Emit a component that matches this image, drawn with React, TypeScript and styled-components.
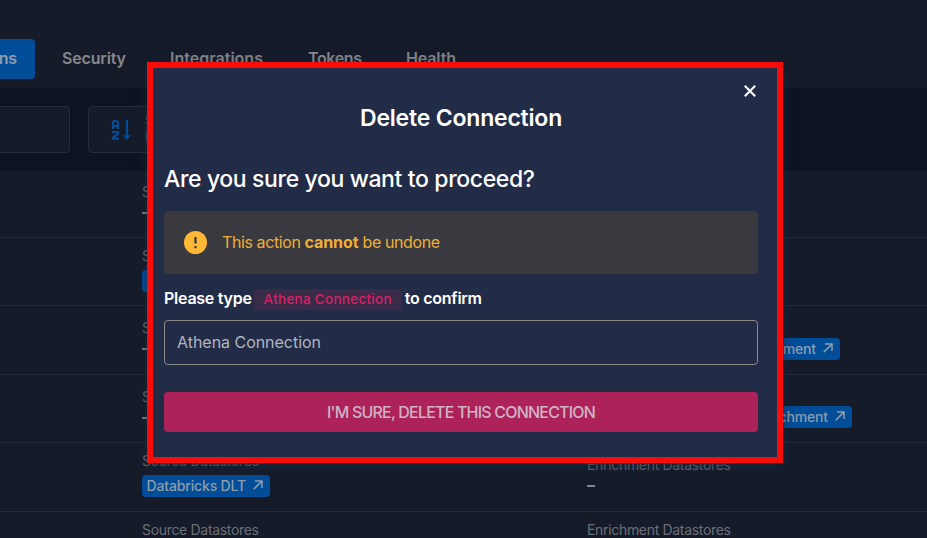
import React from 'react';
import styled, { createGlobalStyle } from 'styled-components';

const GlobalStyle = createGlobalStyle`
  * { box-sizing: border-box; }
  body { margin: 0; background: #151b29; overflow: hidden; }
  button, input { font: inherit; }
`;

const Page = styled.div`
  position: relative;
  width: 927px;
  height: 538px;
  overflow: hidden;
  background: #151b29;
  color: #85878c;
  font-family: Inter, 'Liberation Sans', sans-serif;
`;

const Tabs = styled.nav`
  display: flex;
  align-items: flex-start;
  height: 88px;
  padding-top: 39px;
`;

const Tab = styled.span<{ $width: number; $gap: number; $spacing: number }>`
  width: ${(p) => p.$width}px;
  height: 40px;
  margin-left: ${(p) => p.$gap}px;
  font-size: 16px;
  font-weight: 600;
  line-height: 38px;
  letter-spacing: ${(p) => p.$spacing}px;
  white-space: nowrap;
`;

const ActiveTab = styled(Tab)`
  display: flex;
  justify-content: flex-end;
  padding-right: 18px;
  overflow: hidden;
  border-radius: 0 4px 4px 0;
  background: #024d98;
  color: #8f9dad;
`;

const Toolbar = styled.div`
  display: flex;
  gap: 18px;
  height: 83px;
  padding-top: 18px;
  background: #0d1321;
`;

const SearchField = styled.div`
  width: 70px;
  height: 47px;
  border: 1px solid #262c39;
  border-left: 0;
  border-radius: 0 4px 4px 0;
  background: #151b29;
`;

const SortField = styled.div`
  display: flex;
  align-items: flex-start;
  width: 190px;
  height: 47px;
  padding: 12px 0 0 22px;
  border: 1px solid #262c39;
  border-radius: 4px;
  background: #151b29;
`;

const SortText = styled.div`
  display: flex;
  flex-direction: column;
  margin: -5px 0 0 13px;
  color: #5d626c;
  font-size: 15px;
  line-height: 21px;
`;

const SortLabel = styled.span`
  font-size: 10px;
  line-height: 12px;
`;

const Row = styled.div<{ $height: number }>`
  display: grid;
  grid-template-columns: 445px 1fr;
  height: ${(p) => p.$height}px;
  padding-left: 142px;
  border-bottom: 1px solid #252b38;
`;

const Cell = styled.div<{ $top: number }>`
  display: flex;
  flex-direction: column;
  align-items: flex-start;
  padding-top: ${(p) => p.$top}px;
`;

const Label = styled.span`
  color: #6b6f78;
  font-size: 14px;
  line-height: 18px;
  letter-spacing: -0.32px;
  white-space: nowrap;
`;

const Dash = styled.span`
  width: 8px;
  height: 2px;
  margin-top: 11px;
  background: #85878c;
`;

const Chip = styled.span<{ $width?: number }>`
  display: flex;
  align-items: center;
  justify-content: flex-end;
  gap: 7px;
  width: ${(p) => p.$width}px;
  height: 22px;
  margin-top: 5px;
  padding: 0 7px 2px 0;
  border-radius: 4px;
  background: #024d98;
  color: #8f9dad;
  font-size: 14px;
  font-weight: 500;
  letter-spacing: -0.15px;
  white-space: nowrap;
`;

const Dialog = styled.section`
  position: absolute;
  left: 147px;
  top: 62px;
  display: flex;
  flex-direction: column;
  width: 636px;
  height: 401px;
  padding: 0 19px 0 11px;
  border: 6px solid #f90d0a;
  background: #232c47;
  box-shadow: 0 4px 12px 0 rgba(25, 42, 66, 0.7);
  color: #fff;
`;

const CloseRow = styled.div`
  display: flex;
  justify-content: flex-end;
  height: 34px;
  padding-top: 15px;
`;

const CloseButton = styled.button`
  display: flex;
  align-items: center;
  justify-content: center;
  width: 16px;
  height: 16px;
  padding: 0;
  border: 0;
  background: none;
  color: #fff;
`;

const Title = styled.h1`
  margin: 0;
  font-size: 23px;
  font-weight: 600;
  line-height: 32px;
  letter-spacing: -0.2px;
  text-align: center;
`;

const Question = styled.h2`
  margin: 29px 0 0;
  font-size: 23px;
  font-weight: 500;
  line-height: 32px;
  letter-spacing: -0.37px;
`;

const Warning = styled.div`
  display: flex;
  align-items: center;
  gap: 15px;
  height: 63px;
  margin-top: 16px;
  padding-left: 20px;
  border-radius: 4px;
  background: #3a393f;
  color: #efaf36;
  font-size: 16px;
  letter-spacing: -0.4px;
`;

const WarningText = styled.span`
  padding-bottom: 2px;
`;

const Strong = styled.b`
  font-weight: 700;
  letter-spacing: -0.1px;
`;

const Prompt = styled.div`
  display: flex;
  align-items: center;
  height: 22px;
  margin-top: 13px;
  font-size: 16px;
  font-weight: 600;
  letter-spacing: -0.25px;
`;

const Code = styled.code`
  height: 21px;
  margin: 3px 3px 0 2px;
  width: 148px;
  border-radius: 4px;
  background: #3a2b48;
  color: #db1f63;
  font: 500 13.5px/20px Inter, sans-serif;
  letter-spacing: 0.27px;
  text-align: center;
`;

const Input = styled.input`
  height: 45px;
  margin-top: 11px;
  padding: 0 12px 2px;
  border: 1px solid #8a8b8a;
  border-radius: 4px;
  outline: 0;
  background: transparent;
  color: #b0b5c0;
  font-size: 16px;
  letter-spacing: -0.03px;
`;

const DeleteButton = styled.button`
  height: 40px;
  margin-top: 27px;
  border: 0;
  border-radius: 4px;
  background: #ad2359;
  color: #d0b3c7;
  font-size: 16px;
  font-weight: 500;
  letter-spacing: -0.8px;
`;

const Arrow = () => (
  <svg width="10" height="10" viewBox="0 0 10 10" fill="none" stroke="currentColor" strokeWidth="1.5">
    <path d="M.7 9.2 8.8 1.1M2 1h7v7" />
  </svg>
);

const SortIcon = () => (
  <svg width="21" height="22" viewBox="0 0 21 22" fill="none" stroke="#024d98" strokeWidth="2.2">
    <path d="M2 10V3.600A1.500 1.500 0 0 1 3.500 2h2A1.500 1.500 0 0 1 7 3.600V10M2 7h5M1 13h6v1.500l-5 4.300v.9h6" />
    <path d="M16 1v17" />
    <path d="M12 16.300h8l-4 4.500z" fill="#024d98" stroke="none" />
  </svg>
);

const AlertIcon = () => (
  <svg width="23" height="23" viewBox="0 0 23 23">
    <circle cx="11.500" cy="11.500" r="11.500" fill="#ffb935" />
    <path d="M11.500 6v6.500M11.500 15v2.200" stroke="#3a393f" strokeWidth="2.300" />
  </svg>
);

type CellData = { top: number; chip?: string; width?: number };

const rows: { height: number; source: CellData; enrichment: CellData }[] = [
  { height: 67, source: { top: 12 }, enrichment: { top: 12 } },
  { height: 68, source: { top: 9, chip: 'Athena', width: 90 }, enrichment: { top: 13 } },
  { height: 69, source: { top: 13 }, enrichment: { top: 9, chip: 'Enrichment', width: 253 } },
  { height: 68, source: { top: 13 }, enrichment: { top: 8, chip: 'Enrichment', width: 265 } },
  { height: 69, source: { top: 9, chip: 'Databricks DLT', width: 128 }, enrichment: { top: 13 } },
  { height: 68, source: { top: 9 }, enrichment: { top: 9 } },
];

const DataCell = ({ label, data }: { label: string; data: CellData }) => (
  <Cell $top={data.top}>
    <Label>{label}</Label>
    {data.chip ? (
      <Chip $width={data.width}>
        {data.chip}
        <Arrow />
      </Chip>
    ) : (
      <Dash />
    )}
  </Cell>
);

export default function App() {
  return (
    <Page>
      <GlobalStyle />
      <Tabs>
        <ActiveTab $width={35} $gap={0} $spacing={-0.15}>Connections</ActiveTab>
        <Tab $width={64} $gap={27} $spacing={-0.16}>Security</Tab>
        <Tab $width={93} $gap={44} $spacing={0.02}>Integrations</Tab>
        <Tab $width={54} $gap={45} $spacing={-0.35}>Tokens</Tab>
        <Tab $width={50} $gap={44} $spacing={-0.13}>Health</Tab>
      </Tabs>
      <Toolbar>
        <SearchField />
        <SortField>
          <SortIcon />
          <SortText>
            <SortLabel>Sort by</SortLabel>
            Name
          </SortText>
        </SortField>
      </Toolbar>
      {rows.map((row, i) => (
        <Row key={i} $height={row.height}>
          <DataCell label="Source Datastores" data={row.source} />
          <DataCell label="Enrichment Datastores" data={row.enrichment} />
        </Row>
      ))}
      <Dialog role="dialog" aria-label="Delete Connection">
        <CloseRow>
          <CloseButton aria-label="Close">
            <svg width="12" height="12" viewBox="0 0 12 12" stroke="currentColor" strokeWidth="2.100">
              <path d="m.8.8 10.400 10.400M11.200.8.8 11.200" />
            </svg>
          </CloseButton>
        </CloseRow>
        <Title>Delete Connection</Title>
        <Question>Are you sure you want to proceed?</Question>
        <Warning>
          <AlertIcon />
          <WarningText>This action <Strong>cannot</Strong> be undone</WarningText>
        </Warning>
        <Prompt>
          <span>Please type</span>
          <Code>Athena Connection</Code>
          <span>to confirm</span>
        </Prompt>
        <Input defaultValue="Athena Connection" />
        <DeleteButton>I'M SURE, DELETE THIS CONNECTION</DeleteButton>
      </Dialog>
    </Page>
  );
}
